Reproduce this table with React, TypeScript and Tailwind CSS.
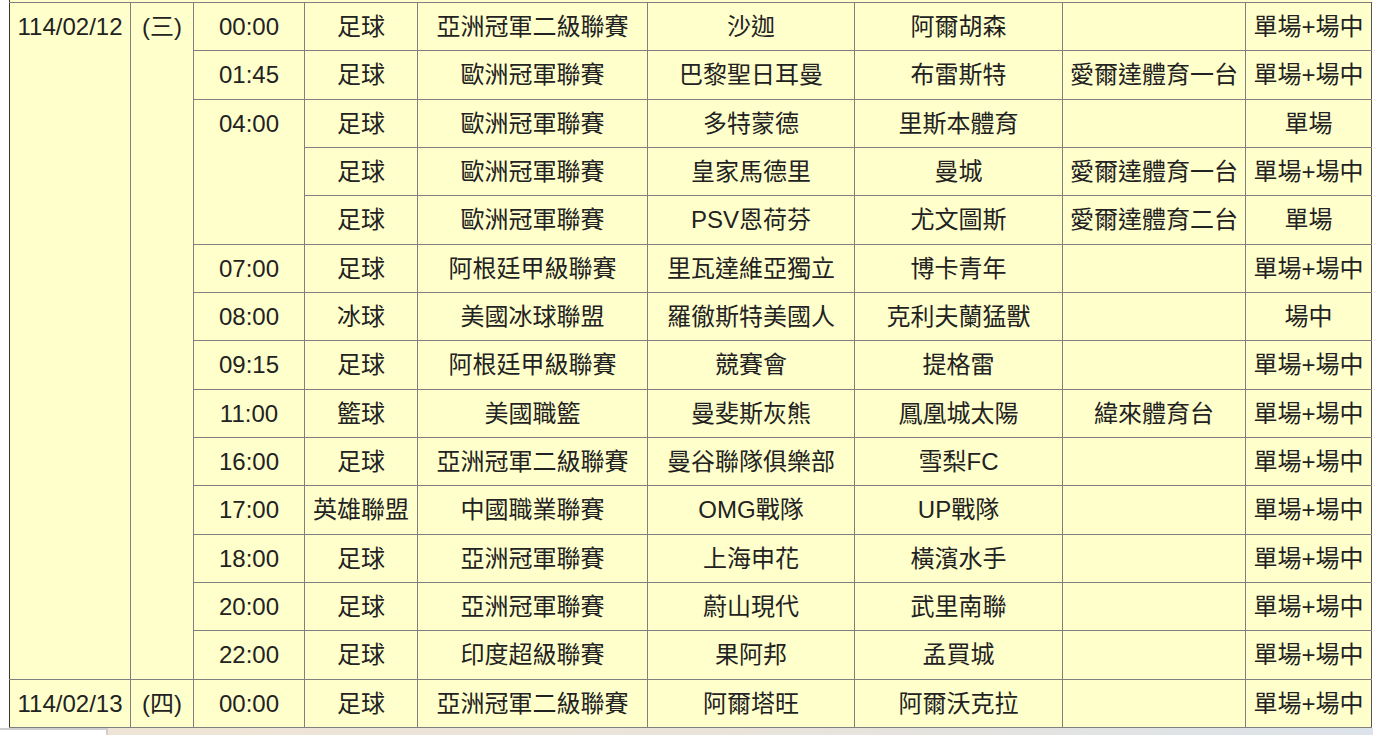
import React from "react";

type Row = {
  date?: { text: string; wd: string; span: number };
  time?: { text: string; span: number };
  sport: string;
  league: string;
  home: string;
  away: string;
  tv: string;
  kind: string;
};

const rows: Row[] = [
  { date: { text: "114/02/12", wd: "(三)", span: 14 }, time: { text: "00:00", span: 1 }, sport: "足球", league: "亞洲冠軍二級聯賽", home: "沙迦", away: "阿爾胡森", tv: "", kind: "單場+場中" },
  { time: { text: "01:45", span: 1 }, sport: "足球", league: "歐洲冠軍聯賽", home: "巴黎聖日耳曼", away: "布雷斯特", tv: "愛爾達體育一台", kind: "單場+場中" },
  { time: { text: "04:00", span: 3 }, sport: "足球", league: "歐洲冠軍聯賽", home: "多特蒙德", away: "里斯本體育", tv: "", kind: "單場" },
  { sport: "足球", league: "歐洲冠軍聯賽", home: "皇家馬德里", away: "曼城", tv: "愛爾達體育一台", kind: "單場+場中" },
  { sport: "足球", league: "歐洲冠軍聯賽", home: "PSV恩荷芬", away: "尤文圖斯", tv: "愛爾達體育二台", kind: "單場" },
  { time: { text: "07:00", span: 1 }, sport: "足球", league: "阿根廷甲級聯賽", home: "里瓦達維亞獨立", away: "博卡青年", tv: "", kind: "單場+場中" },
  { time: { text: "08:00", span: 1 }, sport: "冰球", league: "美國冰球聯盟", home: "羅徹斯特美國人", away: "克利夫蘭猛獸", tv: "", kind: "場中" },
  { time: { text: "09:15", span: 1 }, sport: "足球", league: "阿根廷甲級聯賽", home: "競賽會", away: "提格雷", tv: "", kind: "單場+場中" },
  { time: { text: "11:00", span: 1 }, sport: "籃球", league: "美國職籃", home: "曼斐斯灰熊", away: "鳳凰城太陽", tv: "緯來體育台", kind: "單場+場中" },
  { time: { text: "16:00", span: 1 }, sport: "足球", league: "亞洲冠軍二級聯賽", home: "曼谷聯隊俱樂部", away: "雪梨FC", tv: "", kind: "單場+場中" },
  { time: { text: "17:00", span: 1 }, sport: "英雄聯盟", league: "中國職業聯賽", home: "OMG戰隊", away: "UP戰隊", tv: "", kind: "單場+場中" },
  { time: { text: "18:00", span: 1 }, sport: "足球", league: "亞洲冠軍聯賽", home: "上海申花", away: "橫濱水手", tv: "", kind: "單場+場中" },
  { time: { text: "20:00", span: 1 }, sport: "足球", league: "亞洲冠軍聯賽", home: "蔚山現代", away: "武里南聯", tv: "", kind: "單場+場中" },
  { time: { text: "22:00", span: 1 }, sport: "足球", league: "印度超級聯賽", home: "果阿邦", away: "孟買城", tv: "", kind: "單場+場中" },
  { date: { text: "114/02/13", wd: "(四)", span: 1 }, time: { text: "00:00", span: 1 }, sport: "足球", league: "亞洲冠軍二級聯賽", home: "阿爾塔旺", away: "阿爾沃克拉", tv: "", kind: "單場+場中" },
];

const td = "border border-[#808080] align-top text-center pt-[10px] px-0 leading-[28px] whitespace-nowrap";

export default function App() {
  return (
    <div
      className="w-[1373px] h-[735px] overflow-hidden bg-white text-[24px] text-[#222]"
      style={{ fontFamily: '"Liberation Sans", Arial, "Noto Sans CJK TC", sans-serif' }}
    >
      <div className="ml-[9px] w-[1362px] h-[2px] bg-[#ffffcc] border-l border-[#333]" />
      <table className="ml-[9px] w-[1362px] border-collapse table-fixed bg-[#ffffcc]">
        <colgroup>
          <col className="w-[121px]" />
          <col className="w-[63px]" />
          <col className="w-[111px]" />
          <col className="w-[113px]" />
          <col className="w-[230px]" />
          <col className="w-[207px]" />
          <col className="w-[208px]" />
          <col className="w-[183px]" />
          <col className="w-[126px]" />
        </colgroup>
        <tbody>
          {rows.map((r, i) => (
            <tr key={i} className="h-[48.33px]">
              {r.date && (
                <>
                  <td rowSpan={r.date.span} className={`${td} border-l-[#333]`}>{r.date.text}</td>
                  <td rowSpan={r.date.span} className={td}>{r.date.wd}</td>
                </>
              )}
              {r.time && (
                <td rowSpan={r.time.span} className={td}>{r.time.text}</td>
              )}
              <td className={td}>{r.sport}</td>
              <td className={td}>{r.league}</td>
              <td className={td}>{r.home}</td>
              <td className={td}>{r.away}</td>
              <td className={td}>{r.tv}</td>
              <td className={`${td} border-r-[#555]`}>{r.kind}</td>
            </tr>
          ))}
        </tbody>
      </table>
      <div className="flex h-[8px]">
        <div className="w-[108px] bg-white border-t-2 border-r-2 border-[#cfcfcf]" />
        <div className="flex-1 bg-gradient-to-r from-[#efe5d6] via-[#e9e3da] to-[#dce3ea]" />
      </div>
    </div>
  );
}
